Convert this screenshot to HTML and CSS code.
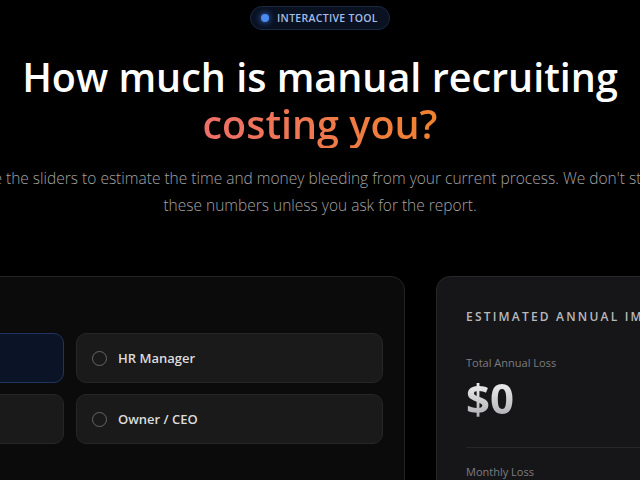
FILE: index.html
```html
<!DOCTYPE html>
<html lang="en">
<head>
  <meta charset="UTF-8">
  <meta name="viewport" content="width=device-width, initial-scale=1.0">
  <title>Recruiting Cost Calculator</title>
  <link rel="stylesheet" href="styles.css">
</head>
<body>
  <main class="page">
    <span class="badge"><span class="badge-dot"></span>Interactive Tool</span>

    <h1 class="title">How much is manual recruiting <span class="accent">costing you?</span></h1>

    <p class="lead">Use the sliders to estimate the time and money bleeding from your current process. We don't store these numbers unless you ask for the report.</p>

    <section class="calc">
      <div class="card inputs">
        <div class="role-grid">
          <label class="role selected"><span class="radio"></span>Recruiter</label>
          <label class="role"><span class="radio"></span>HR Manager</label>
          <label class="role"><span class="radio"></span>Hiring Manager</label>
          <label class="role"><span class="radio"></span>Owner / CEO</label>
        </div>
      </div>

      <div class="card results">
        <h2 class="results-title">Estimated Annual Impact</h2>
        <div class="stat">
          <span class="stat-label">Total Annual Loss</span>
          <span class="stat-value">$0</span>
        </div>
        <hr class="divider">
        <div class="stat">
          <span class="stat-label">Monthly Loss</span>
        </div>
      </div>
    </section>
  </main>
</body>
</html>
```

FILE: styles.css
```css
html, body {
  margin: 0;
  background: #000;
  overflow: hidden;
}
body {
  font-family: "Open Sans", "Noto Sans", sans-serif;
  color: #fff;
}
.page {
  display: flex;
  flex-direction: column;
  align-items: center;
  padding-top: 6px;
}
.badge {
  display: flex;
  align-items: center;
  gap: 8px;
  height: 22px;
  padding: 0 11px 0 10px;
  border: 1px solid #1b2941;
  border-radius: 12px;
  background: #0a1222;
  color: #a3bde6;
  font-size: 10.5px;
  font-weight: 600;
  letter-spacing: 0.3px;
  text-transform: uppercase;
}
.badge-dot {
  width: 8px;
  height: 8px;
  border-radius: 50%;
  background: #4d8af0;
  box-shadow: 0 0 6px #3b7be8;
}
.title {
  margin: 24px 0 0;
  font-size: 39.5px;
  font-weight: 600;
  line-height: 47px;
  text-align: center;
  white-space: nowrap;
}
.accent {
  display: block;
  background: linear-gradient(90deg, #ee6f6a, #f0822e);
  -webkit-background-clip: text;
  background-clip: text;
  color: transparent;
  width: max-content;
  margin: 0 auto;
}
.lead {
  margin: 17px 0 0;
  width: 712px;
  flex-shrink: 0;
  color: #a3a3a3;
  font-size: 15.5px;
  font-weight: 300;
  line-height: 27px;
  text-align: center;
}
.calc {
  display: grid;
  grid-template-columns: 670px 469px;
  gap: 31px;
  flex-shrink: 0;
  margin-top: 57px;
}
.card {
  border-radius: 14px;
  box-sizing: border-box;
}
.inputs {
  background: #0b0b0b;
  border: 1px solid #232323;
  padding: 56px 21px 22px;
}
.role-grid {
  display: grid;
  grid-template-columns: 1fr 1fr;
  gap: 11px 12px;
}
.role {
  display: flex;
  align-items: center;
  gap: 11px;
  height: 50px;
  padding: 0 15px;
  border: 1px solid #262626;
  border-radius: 10px;
  background: #1a1a1a;
  color: #dcdcdc;
  font-size: 13px;
  font-weight: 600;
  box-sizing: border-box;
}
.role.selected {
  background: #0b1426;
  border-color: #1e3560;
}
.radio {
  width: 13px;
  height: 13px;
  border: 1.5px solid #666;
  border-radius: 50%;
}
.results {
  background: #161618;
  border: 1px solid #282828;
  padding: 31px 29px;
}
.results-title {
  margin: 0;
  color: #b9b9bd;
  font-size: 12px;
  font-weight: 600;
  letter-spacing: 2.2px;
  text-transform: uppercase;
  white-space: nowrap;
}
.stat {
  display: flex;
  flex-direction: column;
}
.results-title + .stat {
  margin-top: 30px;
}
.stat-label {
  color: #7d7d80;
  font-size: 11px;
  line-height: 16px;
}
.stat-value {
  margin-top: 2px;
  font-size: 42px;
  font-weight: 700;
  line-height: 50px;
  background: linear-gradient(180deg, #ffffff, #a5a5aa);
  -webkit-background-clip: text;
  background-clip: text;
  color: transparent;
  width: max-content;
}
.divider {
  margin: 24px 0 16px;
  border: 0;
  border-top: 1px solid #262628;
}
```
